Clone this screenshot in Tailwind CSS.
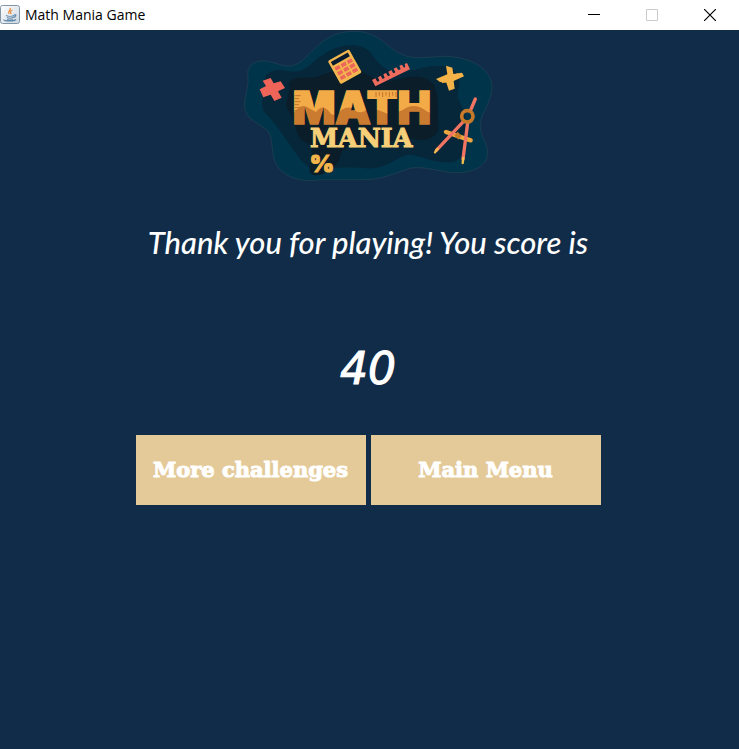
<!DOCTYPE html>
<html lang="en">
<head>
<meta charset="utf-8">
<meta name="viewport" content="width=device-width, initial-scale=1">
<title>Math Mania Game</title>
<script src="https://cdn.jsdelivr.net/npm/@tailwindcss/browser@4"></script>
</head>
<body class="flex min-h-screen flex-col bg-[#112c48] text-white">
<header class="flex h-[30px] items-center bg-white text-black">
  <svg class="size-5 shrink-0" viewBox="0 0 20 20" aria-hidden="true">
    <defs><linearGradient id="tile" x1="0" y1="0" x2="1" y2="1"><stop offset="0" stop-color="#fff"/><stop offset="1" stop-color="#cbd5df"/></linearGradient></defs>
    <rect x="0.5" y="0.5" width="19" height="18" rx="2" fill="url(#tile)" stroke="#8296aa"/>
    <path d="M10 3c2 2-3 3-1 6M12.500 5c-3 1-2 2-1.500 4" fill="none" stroke="#e98b3d" stroke-width="1.300"/>
    <path d="M6 10.500c2 1 6 1 8 0M7 12.500c2 1 4 1 6 0M14 10c3-1 2 2-1 2.500M4 14.500c-1 2 10 2 12 0M7 14.500c2 .8 4 .8 6 0" fill="none" stroke="#5d86ab" stroke-width="1.200"/>
  </svg>
  <h1 class="ml-[5px] flex-1 font-['Segoe_UI','Open_Sans',sans-serif] text-sm">Math Mania Game</h1>
  <button type="button" aria-label="Minimize" class="grid h-full w-[58px] place-items-center"><svg class="size-3" viewBox="0 0 12 12"><path d="M0 5.500h12" stroke="#000"/></svg></button>
  <button type="button" aria-label="Maximize" disabled class="grid h-full w-[58px] place-items-center"><svg class="size-3" viewBox="0 0 12 12"><path d="M.5.5h11v11H.5z" fill="none" stroke="#ccc"/></svg></button>
  <button type="button" aria-label="Close" class="grid h-full w-[58px] place-items-center"><svg class="size-3" viewBox="0 0 12 12"><path d="M0 0l12 12M12 0L0 12" stroke="#000" stroke-width="1.200"/></svg></button>
</header>
<main class="flex flex-1 flex-col items-center pr-[3px]">
  <svg class="h-[154px] w-[264px]" viewBox="0 6 792 462" role="img" aria-label="Math Mania">
    <defs>
      <pattern id="wood" patternUnits="userSpaceOnUse" x="0" y="0" width="792" height="468">
        <rect width="792" height="468" fill="#f3ab48"/>
        <path d="M170 260Q195 220 222 242L240 252Q262 222 285 258L300 262Q330 226 355 246Q376 262 397 240Q430 244 462 262L500 246Q535 220 572 250L600 262V300H170Z" fill="#cb7b30"/>
        <path d="M176 203h18M176 212h13M176 221h18M176 230h13M176 239h18M176 248h13M420 192v15M430 192v11M440 192v15M450 192v11M460 192v15M470 192v11M480 192v15" stroke="#c4722c" stroke-width="3"/>
      </pattern>
    </defs>
    <path d="M35 140C34 110 58 94 95 100C130 106 152 124 183 108C230 82 258 8 358 10C425 12 442 48 485 73C540 104 590 80 646 86C700 92 750 112 766 160C778 208 735 254 733 286C730 322 756 345 755 378C750 420 700 436 655 434C610 432 570 414 525 420C480 434 438 455 385 455H255C205 464 150 452 125 416C99 375 118 332 92 305C62 283 24 270 26 230C28 190 40 177 35 140Z" fill="#00344a" stroke="#244455" stroke-width="2"/>
    <path d="M85 155C95 120 128 125 160 130C213 137 222 102 265 78C310 46 370 44 397 67C421 91 430 125 477 130C529 137 565 107 624 115C670 120 676 155 666 190C660 218 688 240 690 282C702 330 685 397 650 402C605 408 560 385 525 380C481 380 463 424 390 421C330 418 315 418 281 421C225 449 188 390 161 348C134 314 120 286 85 253C68 220 93 190 85 155Z" fill="#062639"/>
    <path d="M160 165C180 137 215 157 250 145C290 124 330 128 370 124C401 151 442 161 474 158C520 142 570 140 594 170C611 206 604 251 607 290C610 330 568 342 530 332C486 326 444 359 384 350C340 346 314 359 310 397C285 435 230 457 221 430C220 395 240 370 215 345C172 328 184 286 160 251C139 223 167 206 160 165Z" fill="#0a1d29"/>
    <path d="M71 184L90 174L80 158L104 150L113 166L134 160L147 180L126 190L137 209L115 219L104 200L82 208Z" fill="#ef6458"/>
    <g transform="translate(275 99) rotate(-29)">
      <rect width="73" height="80" rx="5" fill="#f4b64e"/>
      <rect x="7" y="7" width="58" height="13" fill="#071c31"/>
      <path d="M8 27h16v11H8zM29 27h16v11H29zM50 27h16v11H50zM8 43h16v11H8zM29 43h16v11H29zM50 43h16v11H50zM8 59h16v11H8zM29 59h16v11H29zM50 59h16v11H50z" fill="#ed665a"/>
    </g>
    <path d="M408 156L418 151L424 161L430 158L426 148L434 143L440 153L446 150L442 139L450 135L456 145L462 142L457 131L466 126L472 136L478 133L473 122L481 118L488 127L494 123L490 113L498 110L504 119L508 116L506 108L513 105L522 124L418 175Z" fill="#ef6b5d"/>
    <path d="M630 113L649 119L652 138L678 134L684 145L653 159L656 182L639 188L631 164L612 162L600 153L634 139Z" fill="#f3b348"/>
    <path d="M617 160L668 141" stroke="#f3b348" stroke-width="12"/>
    <text x="170" y="289" font-family="Inter, sans-serif" font-size="134" font-weight="900" fill="url(#wood)" stroke="url(#wood)" stroke-width="5">MATH</text>
    <text x="222" y="357" font-family="DejaVu Serif, serif" font-size="76" font-weight="700" fill="#f7cf78" stroke="#f7cf78" stroke-width="3">MANIA</text>
    <text x="221" y="432" font-family="Inter, sans-serif" font-size="70" font-weight="900" fill="#f4b64b" stroke="#f4b64b" stroke-width="3">%</text>
    <g stroke-linecap="round" fill="none">
      <path d="M630 312L704 337" stroke="#eda63d" stroke-width="13"/>
      <path d="M665 311l12 13-10 11-12-13z" fill="#c47a26"/>
      <path d="M718 213L704 246M682 281L601 367M695 284L681 394" stroke="#f27463" stroke-width="10"/>
      <path d="M605 362L597 373M682 390L680 405" stroke="#f4bd4f" stroke-width="7"/>
      <circle cx="694" cy="265" r="17" stroke="#c77a29" stroke-width="11"/>
    </g>
  </svg>
  <p class="mt-10 px-4 text-center font-['Ink_Free',Lato,sans-serif] text-[31px] leading-9 font-medium italic">Thank you for playing! You score is</p>
  <p class="mt-[82px] font-['Ink_Free','DejaVu_Sans',sans-serif] text-[44px] leading-[54px] italic [-webkit-text-stroke:1px_white]">40</p>
  <div class="mt-[39px] flex flex-wrap justify-center gap-[5px] font-['Cooper_Black','DejaVu_Serif',serif] text-[21px] font-bold [-webkit-text-stroke:1px_white]">
    <button type="button" class="h-[70px] w-[230px] bg-[#e4ca99]">More challenges</button>
    <button type="button" class="h-[70px] w-[230px] bg-[#e4ca99]">Main Menu</button>
  </div>
</main>
</body>
</html>
